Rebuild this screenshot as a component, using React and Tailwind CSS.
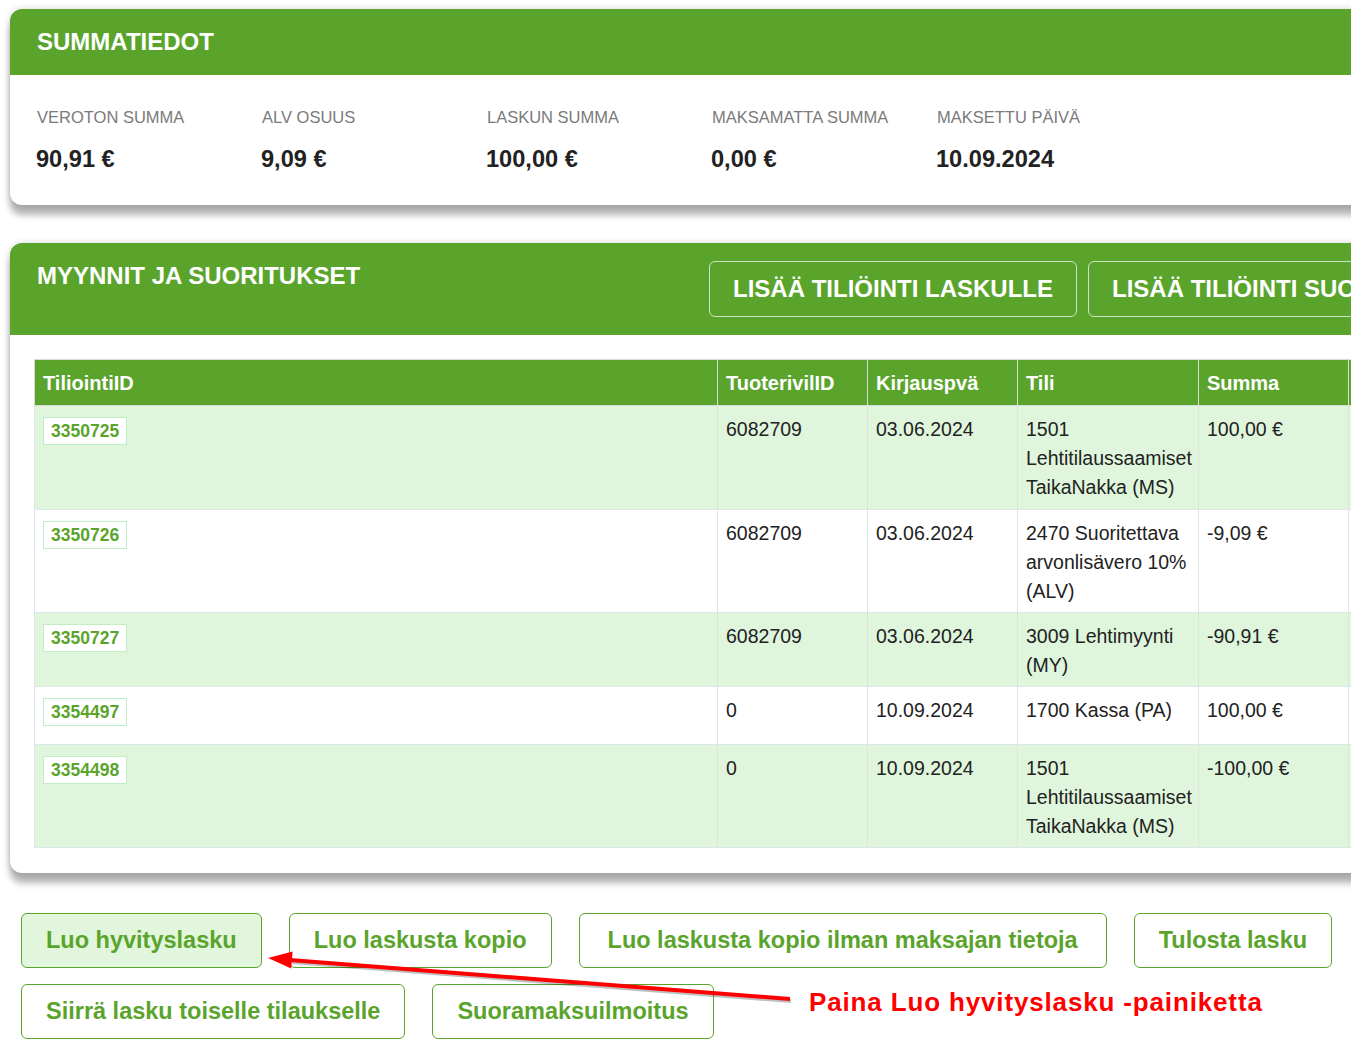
import React from "react";

function Badge({ children }) {
  return (
    <div className="mt-[2px] w-fit h-[28px] px-[7px] border border-[#bfeec5] bg-white text-[17.5px] leading-[26px] font-bold text-[#5aa42c]">
      {children}
    </div>
  );
}

const rows = [
  { id: "3350725", tr: "6082709", date: "03.06.2024", tili: ["1501", "Lehtitilaussaamiset", "TaikaNakka (MS)"], sum: "100,00 €", h: "h-[104px]", bg: "bg-[#dff6dc]" },
  { id: "3350726", tr: "6082709", date: "03.06.2024", tili: ["2470 Suoritettava", "arvonlisävero 10%", "(ALV)"], sum: "-9,09 €", h: "h-[103px]", bg: "bg-white" },
  { id: "3350727", tr: "6082709", date: "03.06.2024", tili: ["3009 Lehtimyynti", "(MY)"], sum: "-90,91 €", h: "h-[73px]", bg: "bg-[#dff6dc]" },
  { id: "3354497", tr: "0", date: "10.09.2024", tili: ["1700 Kassa (PA)"], sum: "100,00 €", h: "h-[58px]", bg: "bg-white" },
  { id: "3354498", tr: "0", date: "10.09.2024", tili: ["1501", "Lehtitilaussaamiset", "TaikaNakka (MS)"], sum: "-100,00 €", h: "h-[102px]", bg: "bg-[#dff6dc]" },
];

function Btn({ children, active, wide }) {
  return (
    <div
      className={
        "h-[55px] flex items-center border border-[#5aa42c] rounded-[6px] text-[23.5px] font-bold text-[#5aa42c] whitespace-nowrap " +
        (wide ? "px-[28px] " : "px-[24px] ") +
        (active ? "bg-[#e1f6dd]" : "bg-white")
      }
    >
      {children}
    </div>
  );
}

export default function App() {
  const th = "h-[46px] text-left align-middle pl-[8px] pr-[6px] font-bold text-[20px] text-white border border-[#d9dcd6]";
  const td = "align-top pt-[9px] pb-[6px] pl-[8px] pr-[6px] text-[19.5px] leading-[29px] text-[#222] border-x border-[#dfe3e0]";
  return (
    <div className="relative w-[1351px] h-[1055px] overflow-hidden bg-white font-['Liberation_Sans',Arial,sans-serif]">
      <div className="pt-[9px] pl-[10px]">
        {/* Card 1 */}
        <div className="w-[1600px] rounded-l-[12px] bg-white overflow-hidden shadow-[0_0_7px_rgba(0,0,0,0.16),0_10px_7px_rgba(0,0,0,0.3)]">
          <div className="h-[66px] bg-[#5aa42c] flex items-center pl-[27px] text-white font-bold text-[24px]">
            SUMMATIEDOT
          </div>
          <div className="h-[130px] flex pl-[27px] pt-[33px]">
            {[
              ["VEROTON SUMMA", "90,91 €"],
              ["ALV OSUUS", "9,09 €"],
              ["LASKUN SUMMA", "100,00 €"],
              ["MAKSAMATTA SUMMA", "0,00 €"],
              ["MAKSETTU PÄIVÄ", "10.09.2024"],
            ].map(([l, v]) => (
              <div key={l} className="w-[225px]">
                <div className="text-[16.5px] leading-[19px] text-[#7a7a7a]">{l}</div>
                <div className="mt-[19px] text-[23.6px] leading-[26px] font-bold text-[#222] -ml-[1px]">{v}</div>
              </div>
            ))}
          </div>
        </div>

        {/* Card 2 */}
        <div className="mt-[38px] w-[1600px] rounded-l-[12px] bg-white overflow-hidden shadow-[0_0_7px_rgba(0,0,0,0.16),0_10px_7px_rgba(0,0,0,0.3)]">
          <div className="h-[92px] bg-[#5aa42c] flex items-start pl-[27px]">
            <div className="w-[672px] pt-[19px] text-white font-bold text-[24px] leading-[28px]">
              MYYNNIT JA SUORITUKSET
            </div>
            <div className="flex gap-[11px] mt-[18px]">
              <div className="h-[56px] px-[23px] flex items-center border border-white/70 rounded-[6px] text-white font-bold text-[24px] whitespace-nowrap">
                LISÄÄ TILIÖINTI LASKULLE
              </div>
              <div className="h-[56px] px-[23px] flex items-center border border-white/70 rounded-[6px] text-white font-bold text-[24px] whitespace-nowrap">
                LISÄÄ TILIÖINTI SUORITUKSELLE
              </div>
            </div>
          </div>
          <div className="pl-[24px] pt-[24px] pb-[25px]">
            <table className="table-fixed border-collapse w-[1514px]">
              <colgroup>
                <col className="w-[683px]" />
                <col className="w-[150px]" />
                <col className="w-[150px]" />
                <col className="w-[181px]" />
                <col className="w-[150px]" />
                <col className="w-[200px]" />
              </colgroup>
              <thead>
                <tr className="bg-[#5aa42c]">
                  <th className={th}>TiliointiID</th>
                  <th className={th}>TuoterivilID</th>
                  <th className={th}>Kirjauspvä</th>
                  <th className={th}>Tili</th>
                  <th className={th}>Summa</th>
                  <th className={th}></th>
                </tr>
              </thead>
              <tbody>
                {rows.map((r) => (
                  <tr key={r.id} className={r.h + " " + r.bg + " border-y border-[#dbe9e6]"}>
                    <td className={td + " border-l-[#dde4ea]"}>
                      <Badge>{r.id}</Badge>
                    </td>
                    <td className={td}>{r.tr}</td>
                    <td className={td}>{r.date}</td>
                    <td className={td}>
                      {r.tili.map((t, i) => (
                        <div key={i} className="whitespace-nowrap">{t}</div>
                      ))}
                    </td>
                    <td className={td}>{r.sum}</td>
                    <td className={td}></td>
                  </tr>
                ))}
              </tbody>
            </table>
          </div>
        </div>
      </div>

      {/* Bottom buttons */}
      <div className="mt-[40px] pl-[21px] flex flex-col gap-[16px]">
        <div className="flex gap-[27px]">
          <Btn active>Luo hyvityslasku</Btn>
          <Btn>Luo laskusta kopio</Btn>
          <Btn wide>Luo laskusta kopio ilman maksajan tietoja</Btn>
          <Btn>Tulosta lasku</Btn>
        </div>
        <div className="flex gap-[27px]">
          <Btn>Siirrä lasku toiselle tilaukselle</Btn>
          <Btn>Suoramaksuilmoitus</Btn>
        </div>
      </div>

      {/* Annotation */}
      <svg className="absolute left-0 top-0 pointer-events-none" width="1351" height="1055">
        <line x1="791" y1="1001" x2="292" y2="962" stroke="rgba(0,0,0,0.25)" strokeWidth="4" />
        <line x1="790" y1="999" x2="290" y2="960" stroke="#ff0000" strokeWidth="4" />
        <polygon points="268,958 292.6,951.4 291.2,968.4" fill="#ff0000" />
      </svg>
      <div className="absolute left-[809px] top-[986px] text-[26px] leading-[32px] font-bold text-[#ff0000] tracking-[0.85px] whitespace-nowrap">
        Paina Luo hyvityslasku -painiketta
      </div>
    </div>
  );
}
